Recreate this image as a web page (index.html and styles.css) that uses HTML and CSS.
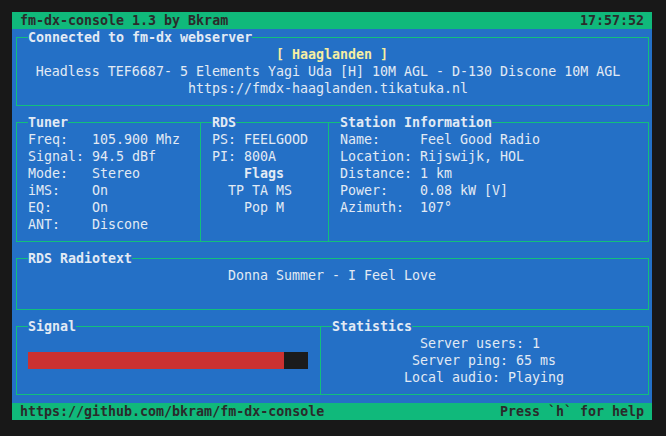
FILE: index.html
```html
<!DOCTYPE html>
<html lang="en">
<head>
  <meta charset="UTF-8" />
  <title>fm-dx-console</title>
  <link rel="stylesheet" href="styles.css">
</head>
<body>
  <div class="term">
    <div class="bar bar-top">
      <span>fm-dx-console 1.3 by Bkram</span>
      <span>17:57:52</span>
    </div>

    <div class="box box-conn">
      <div class="label">Connected to fm-dx webserver</div>
      <div class="center name">[ Haaglanden ]</div>
      <div class="center nudge">Headless TEF6687- 5 Elements Yagi Uda [H] 10M AGL - D-130 Discone 10M AGL</div>
      <div class="center nudge">https://fmdx-haaglanden.tikatuka.nl</div>
    </div>

    <div class="box box-tuner">
      <div class="label">Tuner</div>
      <div class="fields">
        <span>Freq:</span><span>105.900 Mhz</span>
        <span>Signal:</span><span>94.5 dBf</span>
        <span>Mode:</span><span>Stereo</span>
        <span>iMS:</span><span>On</span>
        <span>EQ:</span><span>On</span>
        <span>ANT:</span><span>Discone</span>
      </div>
    </div>

    <div class="box box-rds">
      <div class="label">RDS</div>
      <div class="indent">PS: FEELGOOD</div>
      <div class="indent">PI: 800A</div>
      <div class="center strong">Flags</div>
      <div class="center nudge">TP TA MS</div>
      <div class="center">Pop M</div>
    </div>

    <div class="box box-station">
      <div class="label">Station Information</div>
      <div class="fields fields-wide">
        <span>Name:</span><span>Feel Good Radio</span>
        <span>Location:</span><span>Rijswijk, HOL</span>
        <span>Distance:</span><span>1 km</span>
        <span>Power:</span><span>0.08 kW [V]</span>
        <span>Azimuth:</span><span>107°</span>
      </div>
    </div>

    <div class="box box-text">
      <div class="label">RDS Radiotext</div>
      <div class="center">Donna Summer - I Feel Love</div>
    </div>

    <div class="box box-signal">
      <div class="label">Signal</div>
      <div class="meter">
        <div class="meter-fill" style="width: 256px"></div>
      </div>
    </div>

    <div class="box box-stats">
      <div class="label">Statistics</div>
      <div class="center nudge">Server users: 1</div>
      <div class="center">Server ping: 65 ms</div>
      <div class="center">Local audio: Playing</div>
    </div>

    <div class="bar bar-bottom">
      <span>https://github.com/bkram/fm-dx-console</span>
      <span>Press `h` for help</span>
    </div>
  </div>
</body>
</html>
```

FILE: styles.css
```css
body {
  margin: 0;
  padding: 12px;
  background: #181818;
  font-family: 'DejaVu Sans Mono', monospace;
  font-size: 13.3px;
  line-height: 17px;
  color: #e2eaf4;
}
.term {
  display: grid;
  grid-template-columns: repeat(80, 8px);
  grid-template-rows: repeat(24, 17px);
  width: 640px;
  background: #2470c6;
}
.bar {
  grid-column: 1 / -1;
  display: flex;
  justify-content: space-between;
  padding: 0 8px;
  background: #10b97b;
  color: #2b2b2b;
  font-weight: bold;
}
.bar-top {
  grid-row: 1;
}
.bar-bottom {
  grid-row: 24;
}
.box {
  position: relative;
  margin: 8px 3px 8px 4px;
  padding: 8px 4px 0 3px;
  border: 1px solid #12bf7c;
  min-width: 0;
}
.label {
  position: absolute;
  top: -9px;
  left: 11px;
  background: #2470c6;
  font-weight: bold;
  white-space: nowrap;
}
.box-conn {
  grid-column: 1 / -1;
  grid-row: 2 / 7;
}
.box-tuner {
  grid-column: 1 / 25;
  grid-row: 7 / 15;
}
.box-rds {
  grid-column: 24 / 41;
  grid-row: 7 / 15;
}
.box-station {
  grid-column: 40 / 81;
  grid-row: 7 / 15;
}
.box-text {
  grid-column: 1 / -1;
  grid-row: 15 / 19;
}
.box-signal {
  grid-column: 1 / 40;
  grid-row: 19 / 24;
}
.box-stats {
  grid-column: 39 / 81;
  grid-row: 19 / 24;
}
.center {
  text-align: center;
  white-space: nowrap;
}
.nudge {
  padding-right: 8px;
}
.indent {
  padding-left: 8px;
  white-space: nowrap;
}
.name {
  color: #f6eea2;
  font-weight: bold;
}
.strong {
  font-weight: bold;
}
.fields {
  display: grid;
  grid-template-columns: 64px auto;
  padding-left: 8px;
  white-space: nowrap;
}
.fields-wide {
  grid-template-columns: 80px auto;
}
.meter {
  margin: 17px 0 0 8px;
  width: 280px;
  height: 17px;
  background: #1b1b1b;
}
.meter-fill {
  height: 100%;
  background: #cc3131;
}
```
